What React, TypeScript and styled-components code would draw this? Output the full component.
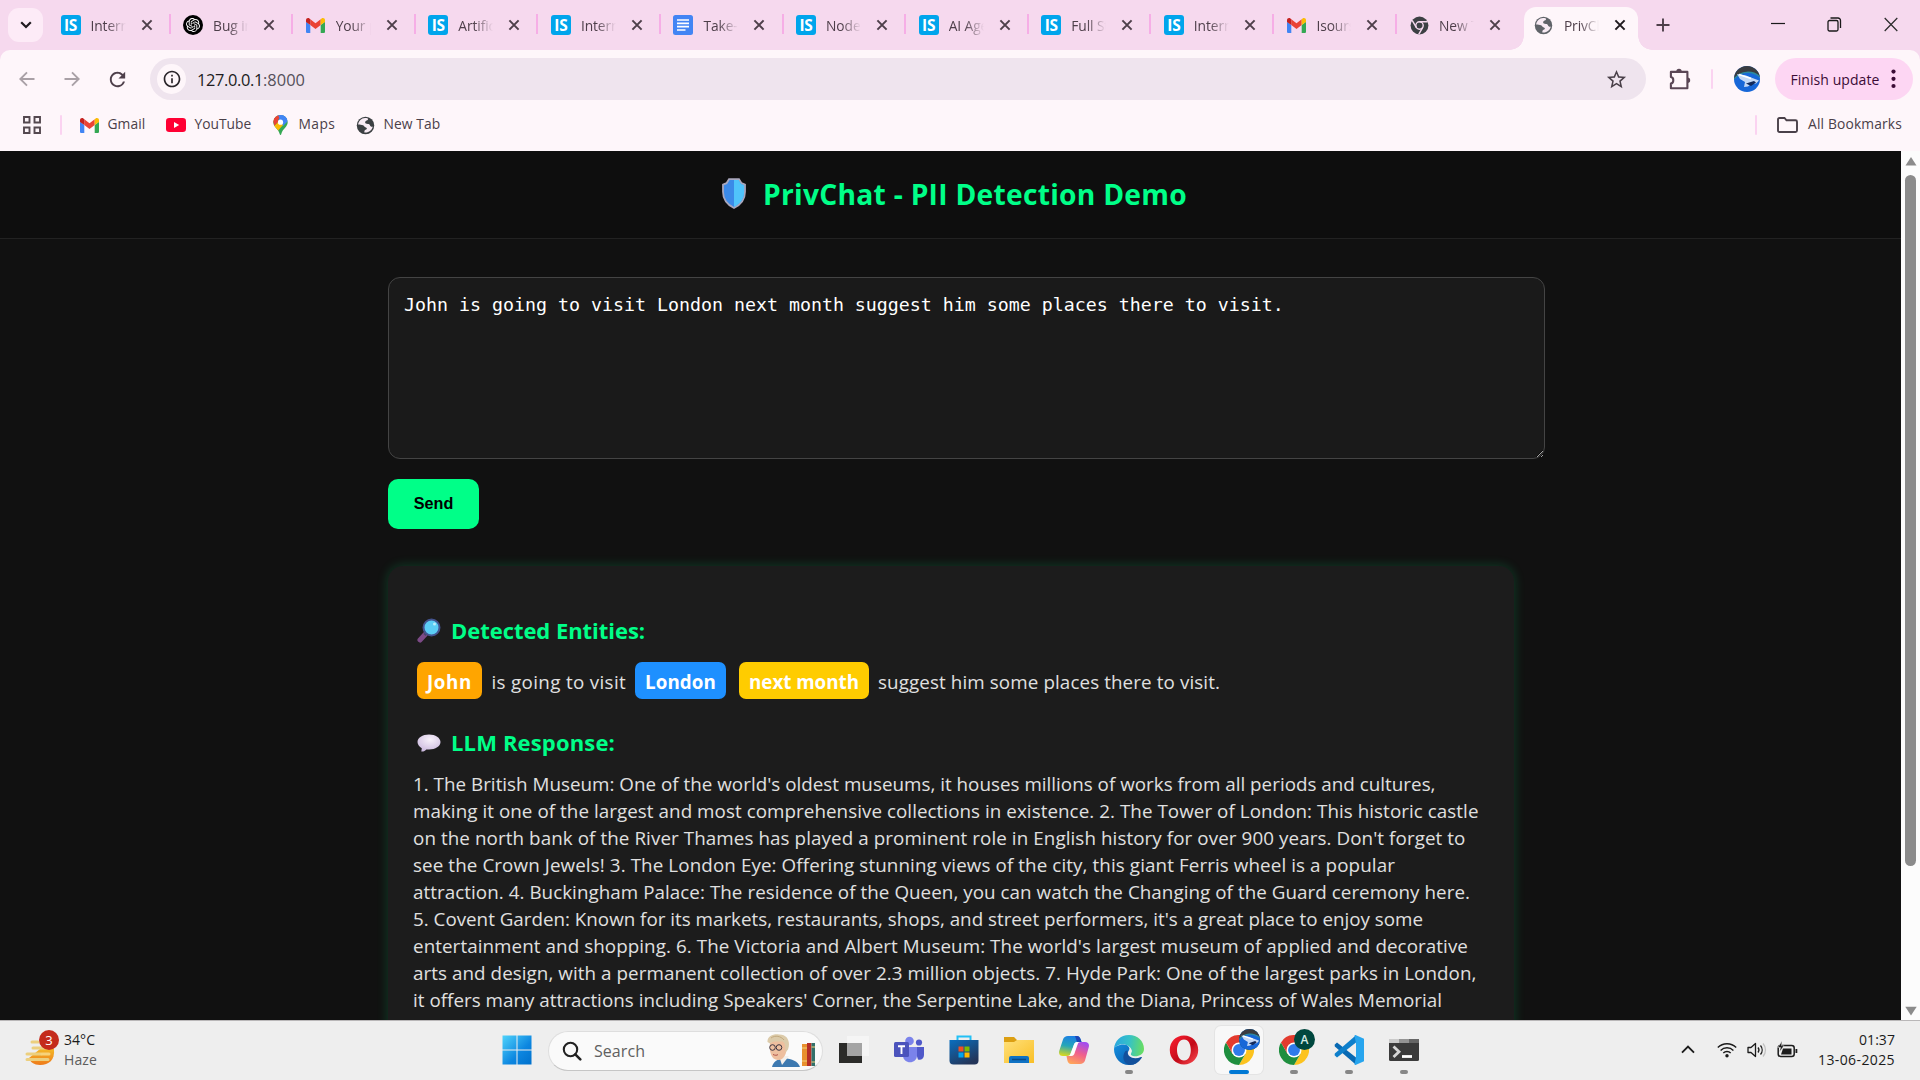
import React, { useLayoutEffect, useRef, useState } from 'react';
import styled, { createGlobalStyle } from 'styled-components';
import { MdStarBorder, MdInfoOutline, MdRefresh } from 'react-icons/md';
import { SiOpenai } from 'react-icons/si';

const UI = `"Open Sans", "Noto Sans", sans-serif`;

const GlobalStyle = createGlobalStyle`
  html, body { margin: 0; padding: 0; overflow: hidden; background: #111; }
  *, *::before, *::after { box-sizing: border-box; }
  svg { display: block; flex: none; }
`;

/* Text tracked so that it spans a given width. */
const FitSpan = styled.span`
  display: inline-block;
  white-space: pre;
  flex: none;
`;
const FitBox = styled.span<{ $w: number }>`
  display: block;
  width: ${(p) => p.$w}px;
  white-space: pre;
  flex: none;
`;
function Fit({ w, children }: { w: number; children: string }) {
  const ref = useRef<HTMLSpanElement>(null);
  const [spacing, setSpacing] = useState(0);
  useLayoutEffect(() => {
    if (!ref.current) return;
    const natural = ref.current.getBoundingClientRect().width;
    setSpacing((w - natural) / children.length);
  }, [w, children]);
  return (
    <FitBox $w={w}>
      <FitSpan ref={ref} style={{ letterSpacing: spacing }}>{children}</FitSpan>
    </FitBox>
  );
}

const Screen = styled.div`
  width: 1920px;
  height: 1080px;
  display: flex;
  flex-direction: column;
  overflow: hidden;
  font-family: ${UI};
  background: #111;
`;

/* ---------- browser frame ---------- */
const TabStrip = styled.div`
  height: 50px;
  flex: none;
  display: flex;
  align-items: flex-start;
  background: #f6d9ee;
  padding-left: 8px;
`;
const TabSearch = styled.div`
  width: 35px;
  height: 34px;
  margin: 8px 5.5px 0 0;
  border-radius: 11px;
  background: #fdebf7;
  display: grid;
  place-items: center;
  flex: none;
`;
const Tab = styled.div<{ $sep: boolean }>`
  width: 122.6px;
  height: 50px;
  flex: none;
  display: flex;
  align-items: center;
  padding-left: 12px;
  background: ${(p) => (p.$sep ? 'linear-gradient(#f6aee6, #f6aee6) right 0 top 14px / 2.4px 20px no-repeat' : 'none')};
`;
const Favicon = styled.div`
  width: 20px;
  height: 20px;
  display: grid;
  place-items: center;
  flex: none;
`;
const TabTitle = styled.div`
  width: 35px;
  margin-left: 10px;
  height: 24px;
  line-height: 26px;
  font-size: 13.8px;
  letter-spacing: -0.1px;
  color: #4e3f4a;
  overflow: hidden;
  white-space: pre;
  mask-image: linear-gradient(to right, #000 45%, transparent 100%);
`;
const CloseSlot = styled.div`
  margin-left: 15px;
  width: 12px;
`;
const ActiveTab = styled.div`
  width: 114px;
  height: 43px;
  flex: none;
  margin: 7px 0 0 4.3px;
  background: #fef6fa;
  border-radius: 12px 12px 0 0;
  display: flex;
  align-items: center;
  padding: 0 0 7px 10px;
  position: relative;
  &::before, &::after {
    content: '';
    position: absolute;
    bottom: 0;
    width: 14px;
    height: 14px;
  }
  &::before { left: -14px; background: radial-gradient(circle at 0 0, transparent 13.5px, #fef6fa 14px); }
  &::after { right: -14px; background: radial-gradient(circle at 100% 0, transparent 13.5px, #fef6fa 14px); }
`;
const NewTab = styled.div`
  margin: 18px 0 0 18px;
`;
const WindowButtons = styled.div`
  margin-left: auto;
  padding: 17px 22px 0 0;
  display: flex;
  gap: 42px;
`;
const ToolbarBack = styled.div`
  flex: none;
  background: #f6d9ee;
`;
const Toolbar = styled.div`
  height: 58px;
  background: #fef6fa;
  border-radius: 10px 10px 0 0;
  display: flex;
  align-items: center;
  padding-left: 16px;
`;
const NavIcon = styled.div<{ $mr: number }>`
  width: 22px;
  height: 22px;
  display: grid;
  place-items: center;
  margin-right: ${(p) => p.$mr}px;
`;
const Omnibox = styled.div`
  width: 1496px;
  height: 42px;
  border-radius: 21px;
  background: #efe4ee;
  display: flex;
  align-items: center;
  padding: 0 18px 0 7px;
  margin-right: 23px;
  font-size: 16.4px;
  color: #201b20;
`;
const InfoBadge = styled.div`
  width: 29px;
  height: 30px;
  border-radius: 50%;
  background: #fef6fa;
  display: grid;
  place-items: center;
  margin-right: 11px;
`;
const Port = styled.div`
  color: #55505a;
  flex: 1;
`;
const Divider = styled.div<{ $ml: number; $mr: number }>`
  width: 2.4px;
  height: 20px;
  border-radius: 1px;
  background: #fbd3f1;
  margin: 0 ${(p) => p.$mr}px 0 ${(p) => p.$ml}px;
`;
const UpdatePill = styled.div`
  width: 138px;
  height: 42px;
  border-radius: 21px;
  background: #fdd6f3;
  margin-left: 15px;
  padding-left: 15px;
  display: flex;
  align-items: center;
  font-size: 14px;
  color: #3b0c36;
`;
const Bookmarks = styled.div`
  height: 43px;
  flex: none;
  background: #fef6fa;
  display: flex;
  align-items: center;
  padding: 0 18px 9px 23px;
  font-size: 13.8px;
  line-height: 18px;
  color: #4a4049;
`;
const Bookmark = styled.div<{ $gap: number; $mr: number }>`
  display: flex;
  align-items: center;
  gap: ${(p) => p.$gap}px;
  margin-right: ${(p) => p.$mr}px;
`;
const BookmarkLabel = styled.div`
  padding-bottom: 2px;
`;
const Spacer = styled.div`
  flex: 1;
`;

/* ---------- page ---------- */
const Viewport = styled.div`
  height: 869px;
  flex: none;
  display: flex;
  overflow: hidden;
`;
const Page = styled.div`
  width: 1901px;
  height: 869px;
  overflow: hidden;
  background: #111;
`;
const PageHeader = styled.header`
  height: 88px;
  background: #0e0e0e;
  border-bottom: 1px solid #222;
  display: flex;
  justify-content: center;
  align-items: flex-start;
  padding: 23px 0 0 8px;
  gap: 17px;
  color: #00ff88;
  font-weight: 700;
  font-size: 28.2px;
  line-height: 40px;
`;
const ShieldSlot = styled.div`
  padding-top: 4px;
`;
const Main = styled.main`
  padding: 38px 0 0 388px;
`;
const Prompt = styled.textarea`
  display: block;
  width: 1157px;
  height: 182px;
  padding: 15px;
  border: 1px solid #444;
  border-radius: 12px;
  background: #1a1a1a;
  color: #fff;
  outline: none;
  resize: both;
  font-family: "DejaVu Sans Mono", "Liberation Mono", monospace;
  font-size: 18.27px;
  line-height: 24px;
`;
const SendButton = styled.button`
  display: block;
  width: 91px;
  height: 50px;
  margin: 20px 0 37px;
  padding: 0 0 1px;
  border: 0;
  border-radius: 10px;
  background: #00ff88;
  color: #000;
  font: 700 16.2px "Liberation Sans", Arial, sans-serif;
`;
const Card = styled.section`
  width: 1126px;
  height: 640px;
  padding: 49px 25px 0;
  border-radius: 15px;
  background: #1c1c1c;
  box-shadow: 0 0 12px rgba(0, 255, 136, 0.2);
  color: #e0e0e0;
  font-size: 18.8px;
`;
const SectionTitle = styled.h3`
  margin: 0;
  height: 31px;
  display: flex;
  align-items: center;
  padding-left: 4px;
  gap: 10px;
  color: #00ff88;
  font-size: 22px;
  line-height: 31px;
`;
const Entities = styled.div`
  margin: 16px 0 28px;
  height: 37px;
  line-height: 41px;
  display: flex;
  padding-left: 4px;
`;
const Tag = styled.span<{ $color: string; $mr: number }>`
  height: 37px;
  padding: 0 10px;
  border-radius: 7px;
  background: ${(p) => p.$color};
  color: #fff;
  font-weight: 700;
  margin-right: ${(p) => p.$mr}px;
`;
const Plain = styled.span<{ $mr?: number }>`
  margin-right: ${(p) => p.$mr ?? 0}px;
`;
const Response = styled.div`
  margin-top: 13px;
  line-height: 27px;
`;
const Scrollbar = styled.div`
  width: 19px;
  background: #fcfcfc;
  display: flex;
  flex-direction: column;
  align-items: center;
  justify-content: space-between;
  padding: 6px 0 4px;
`;
const Track = styled.div`
  flex: 1;
  padding-top: 9px;
`;
const Thumb = styled.div`
  width: 11px;
  height: 691px;
  border-radius: 6px;
  background: #8b8b8b;
`;

/* ---------- taskbar ---------- */
const Taskbar = styled.footer`
  height: 60px;
  flex: none;
  background: #eee;
  border-top: 1px solid #b9b7b8;
  display: flex;
  align-items: center;
  color: #1b1b1b;
  font-size: 14px;
`;
const Weather = styled.div`
  width: 493px;
  flex: none;
  display: flex;
  align-items: center;
  gap: 4px;
  padding-left: 24px;
`;
const TwoLines = styled.div`
  line-height: 20px;
  padding-bottom: 1px;
`;
const Muted = styled.div`
  color: #5c5c5c;
`;
const AppSlot = styled.div<{ $active?: boolean }>`
  width: 48px;
  height: 48px;
  margin: 0 7px 1px 0;
  flex: none;
  border-radius: 6px;
  display: flex;
  flex-direction: column;
  align-items: center;
  justify-content: flex-end;
  background: ${(p) => (p.$active ? '#f8f8f8' : 'transparent')};
  box-shadow: ${(p) => (p.$active ? '0 0 0 1px #e4e4e4' : 'none')};
`;
const IndicatorRow = styled.div`
  height: 9px;
  display: flex;
  align-items: flex-end;
`;
const Indicator = styled.div<{ $kind?: string }>`
  width: ${(p) => (p.$kind === 'active' ? 20 : 8)}px;
  height: 4px;
  border-radius: 2px;
  background: ${(p) => (p.$kind === 'active' ? '#0078d4' : p.$kind === 'open' ? '#868686' : 'transparent')};
`;
const SearchPill = styled.div`
  width: 275px;
  height: 40px;
  margin-right: 7px;
  flex: none;
  border-radius: 20px;
  border: 1px solid #dedede;
  border-bottom-color: #c6c6c6;
  background: #fafafa;
  display: flex;
  align-items: center;
  padding: 0 5px 0 13px;
  gap: 12px;
  font-size: 16px;
  color: #606060;
`;
const Tray = styled.div`
  margin-left: auto;
  display: flex;
  align-items: center;
  padding-right: 25px;
`;
const TraySlot = styled.div<{ $mr: number }>`
  margin-right: ${(p) => p.$mr}px;
  padding-bottom: 2px;
`;
const Clock = styled(TwoLines)`
  display: flex;
  flex-direction: column;
  align-items: flex-end;
`;

/* ---------- icons ---------- */
const X = ({ color = '#4e3f4a' }: { color?: string }) => (
  <svg width="12" height="12" viewBox="0 0 12 12"><path d="M1.4 1.4l9.2 9.2M10.6 1.4l-9.2 9.2" stroke={color} strokeWidth="2" /></svg>
);
const ISBox = styled.div`
  width: 20px;
  height: 20px;
  border-radius: 3px;
  background: #00a5ec;
  color: #fff;
  font: 700 15.5px/20px ${UI};
  letter-spacing: -0.3px;
  text-align: center;
`;
const PuzzleIcon = () => (
  <svg width="22" height="22" viewBox="0 0 22 22">
    <path d="M1.900 3.900h16.500v16.300H1.900v-4.600c3.200-.4 3.200-6.200 0-6.600z" fill="none" stroke="#5a4655" strokeWidth="2.100" strokeLinejoin="round" />
    <path d="M7.300 3.500a2.700 2.700 0 0 1 5.400 0zM18.500 9.600a2.700 2.700 0 0 1 0 5.400z" fill="#5a4655" />
  </svg>
);
const GmailIcon = () => (
  <svg width="19" height="15" viewBox="0 0 19 15">
    <path d="M0 2v11.7c0 .7.6 1.3 1.3 1.3h3V7L0 3.8z" fill="#4285f4" />
    <path d="M19 2v11.7c0 .7-.6 1.3-1.3 1.3h-3V7L19 3.8z" fill="#34a853" />
    <path d="M4.3 7V1.3l5.2 3.9 5.2-3.9V7L9.5 11z" fill="#ea4335" />
    <path d="M0 2C0 .3 2-.6 3.4.5l.9.8V7L0 3.9z" fill="#c5221f" />
    <path d="M19 2c0-1.700-2-2.600-3.400-1.500l-.9.8V7L19 3.900z" fill="#fbbc04" />
  </svg>
);
const DocsIcon = () => (
  <svg width="20" height="20" viewBox="0 0 20 20">
    <rect width="20" height="20" rx="2.500" fill="#4285f4" />
    <path d="M4 5h12M4 8.400h12M4 11.700h12M4 15h8.500" stroke="#fff" strokeWidth="1.700" />
  </svg>
);
const OpenAIBox = styled.div`
  width: 20px;
  height: 20px;
  border-radius: 50%;
  background: #000;
  color: #fff;
  display: grid;
  place-items: center;
`;
const Globe = ({ color }: { color: string }) => (
  <svg width="19" height="19" viewBox="0 0 20 20">
    <circle cx="10" cy="10" r="9.200" fill={color} />
    <path d="M9.500 2.200C5.500 2.500 2.800 5.200 2.200 9c1.800.2 4 .1 5.200.8 1.300.8 1.400 2 3 2.300 1.500.4 1.400 2-.2 2.300-1.200.3-1.500 1.500-1.400 3 4.500.6 8-2.200 8.900-6.300-1.300.5-2.600-.1-3-1.400-.4-1.400-2-1.200-3.300-1.500-1.800-.3-2.500-2-1-3 .9-.7 2.400-.7 2.300-2C12.600 2.500 11 2.100 9.500 2.200z" fill="#f8ebf4" />
  </svg>
);
const ChromeGray = () => (
  <svg width="19" height="19" viewBox="0 0 20 20">
    <circle cx="10" cy="10" r="9.400" fill="#3c4043" />
    <circle cx="10" cy="10" r="3.900" fill="none" stroke="#f6d9ee" strokeWidth="1.500" />
    <path d="M10 6.100h8.600M6.600 12L2.300 4.600M13.400 12L9.200 19.300" stroke="#f6d9ee" strokeWidth="1.500" />
  </svg>
);
const MapsPin = () => (
  <svg width="15" height="20" viewBox="0 0 15 20">
    <defs><clipPath id="pin"><path d="M7.500 0A7.200 7.200 0 0 0 .3 7.200C.3 12 5.500 13.500 6.700 19c.2 1.200 1.400 1.200 1.600 0 1.200-5.500 6.400-7 6.400-11.800A7.200 7.200 0 0 0 7.500 0z" /></clipPath></defs>
    <g clipPath="url(#pin)">
      <rect width="15" height="20" fill="#34a853" />
      <path d="M0 0h9L2 9 0 7z" fill="#ea4335" />
      <path d="M5 0h10v3L9 8z" fill="#4285f4" />
      <path d="M8 0h7v6l-5 5-5-5z" fill="#4285f4" />
      <path d="M0 12l6-6 4 4-7 8z" fill="#fbbc04" />
      <path d="M0 2l6 4-5 5z" fill="#ea4335" />
    </g>
    <circle cx="7.500" cy="7.200" r="2.600" fill="#fff" />
  </svg>
);
const Avatar = ({ size, id }: { size: number; id: string }) => (
  <svg width={size} height={size} viewBox="0 0 26 26">
    <defs><clipPath id={id}><circle cx="13" cy="13" r="13" /></clipPath></defs>
    <g clipPath={`url(#${id})`}>
      <rect width="26" height="26" fill="#1767d8" />
      <path d="M0 0h26v11C18 4 8 5 0 13z" fill="#3a3c40" />
      <path d="M0 13C7 5 18 4 26 11" fill="none" stroke="#2b8aa0" strokeWidth="1.400" />
      <path d="M3 8l9 1.500 9 3.500 4 1.500-3 3-5 .5-3 2.500-4 .5 1-5-5-3z" fill="#c3d8f6" />
      <path d="M12 17.500l8-2.500 2 1.500-5 3.500z" fill="#122a5c" />
      <path d="M5 8.500l12 4" stroke="#fff" strokeWidth="1.500" />
    </g>
  </svg>
);
const ChromeIcon = () => (
  <svg width="30" height="30" viewBox="0 0 48 48">
    <path d="M24 12h20.800A24 24 0 0 1 24 48l10.400-18z" fill="#fcc31f" />
    <path d="M3.200 12A24 24 0 0 0 24 48l10.400-18H13.600z" fill="#1e8e3e" />
    <path d="M24 12H44.800A24 24 0 0 0 3.200 12l10.400 18z" fill="#e33b2e" />
    <circle cx="24" cy="24" r="12" fill="#fff" />
    <circle cx="24" cy="24" r="9.500" fill="#2f7bea" />
  </svg>
);
const ChromeWrap = styled.div`
  position: relative;
`;
const ProfileBadge = styled.div`
  position: absolute;
  left: 15px;
  top: -6px;
  width: 21px;
  height: 21px;
  border-radius: 50%;
  background: #00473e;
  color: #d5ece6;
  font-size: 12px;
  font-weight: 600;
  line-height: 21px;
  text-align: center;
`;

const Magnifier = () => (
  <svg width="24" height="25" viewBox="0 0 24 25">
    <path d="M8.500 16L3 22" stroke="#7c4a86" strokeWidth="5" strokeLinecap="round" />
    <path d="M9.500 15l-2 2" stroke="#4a4468" strokeWidth="3" />
    <circle cx="14.500" cy="9.500" r="8" fill="#5bcdf5" stroke="#44548f" strokeWidth="2" />
    <circle cx="17.500" cy="6" r="1.500" fill="#b8eefc" />
  </svg>
);
const Bubble = () => (
  <svg width="24" height="18" viewBox="0 0 24 18">
    <defs><radialGradient id="bub" cx=".55" cy=".3" r=".7"><stop offset="0" stopColor="#f8f2fb" /><stop offset="1" stopColor="#cdbbdf" /></radialGradient></defs>
    <path d="M12 .5C5.500.5.500 3.800.500 8c0 2.600 1.800 4.800 4.300 6.200L4.300 17.500c2 .3 4-.7 5-2.100l2.700.2c6.500 0 11.500-3.300 11.500-7.500S18.500.5 12 .5z" fill="url(#bub)" />
  </svg>
);
const Shield = () => (
  <svg width="24" height="31" viewBox="0 0 24 31">
    <path d="M7 1.200h10l2.500 4 3.500 1.500v7c0 8-4.500 13-11 16.300C5.500 26.700 1 21.700 1 13.700v-7l3.500-1.500z" fill="#3b8ae8" stroke="#a9a7bd" strokeWidth="1.800" />
    <path d="M12 2h4.600l2.300 3.900 3.200 1.400v6.400c0 7.300-4 12-10.100 15.200z" fill="#50c4fb" />
  </svg>
);

const WinIcon = () => (
  <svg width="30" height="30" viewBox="0 0 30 30">
    <defs><linearGradient id="win" x1="0" y1="0" x2="1" y2="1"><stop offset="0" stopColor="#4fd3fb" /><stop offset=".6" stopColor="#0c86e0" /><stop offset="1" stopColor="#0070cc" /></linearGradient></defs>
    <path d="M.5.5h14v14H.5zM15.500.5h14v14h-14zM.5 15.500h14v14H.5zM15.500 15.500h14v14h-14z" fill="url(#win)" />
  </svg>
);
const TaskViewIcon = () => (
  <svg width="30" height="30" viewBox="0 0 30 30">
    <path d="M0 8h23v20H0z" fill="#2b2b29" />
    <path d="M8 1h22v20H8z" fill="#f5f5f5" />
    <path d="M8 8h15v13H8z" fill="#a4a4a4" />
  </svg>
);
const TeamsIcon = () => (
  <svg width="30" height="30" viewBox="0 0 30 30">
    <circle cx="15.500" cy="6" r="4.300" fill="#7b83eb" /><circle cx="25" cy="7.500" r="3.100" fill="#5059c9" />
    <path d="M20 12h10v8c0 3.500-3 5.500-6 4.500z" fill="#5059c9" />
    <path d="M9 12h14v8.500c0 9-14 9-14 0z" fill="#7b83eb" />
    <rect y="7" width="15" height="15" rx="1.500" fill="#4b53bc" />
    <path d="M4 11.300h7M7.500 11.300V19" stroke="#fff" strokeWidth="1.900" />
  </svg>
);
const StoreIcon = () => (
  <svg width="30" height="30" viewBox="0 0 30 30">
    <defs><linearGradient id="st" x1="0" y1="0" x2=".6" y2="1"><stop offset="0" stopColor="#0a6fc0" /><stop offset="1" stopColor="#233559" /></linearGradient></defs>
    <path d="M8.500 6V1.500h13V6" fill="none" stroke="#23c0f5" strokeWidth="2" />
    <path d="M.5 5h29v20.500a4 4 0 0 1-4 4h-21a4 4 0 0 1-4-4z" fill="url(#st)" />
    <path d="M9.500 11.500h5v5h-5z" fill="#f25022" /><path d="M15.500 11.500h5v5h-5z" fill="#7fba00" />
    <path d="M9.500 17.500h5v5h-5z" fill="#00a4ef" /><path d="M15.500 17.500h5v5h-5z" fill="#ffb900" />
  </svg>
);
const FolderIcon = () => (
  <svg width="30" height="30" viewBox="0 0 30 30">
    <defs><linearGradient id="fo" x1="0" y1="0" x2="1" y2="1"><stop offset="0" stopColor="#ffe07a" /><stop offset="1" stopColor="#f9bf26" /></linearGradient></defs>
    <path d="M0 2h10l3 3h17v6H0z" fill="#dc9f12" />
    <path d="M0 7h10l3-2h17v23H0z" fill="url(#fo)" />
    <path d="M5 28v-5a2 2 0 0 1 2-2h16a2 2 0 0 1 2 2v5z" fill="#0f72c4" />
    <path d="M8 24.500h14" stroke="#0a4a86" strokeWidth="1.500" />
  </svg>
);
const CopilotIcon = () => (
  <svg width="30" height="30" viewBox="0 0 30 30">
    <defs>
      <linearGradient id="c1" x1=".5" y1="0" x2=".3" y2="1"><stop offset="0" stopColor="#1b7fe4" /><stop offset=".5" stopColor="#25a6b8" /><stop offset="1" stopColor="#d8d820" /></linearGradient>
      <linearGradient id="c2" x1=".7" y1="0" x2=".3" y2="1"><stop offset="0" stopColor="#a24df0" /><stop offset=".5" stopColor="#f0608c" /><stop offset="1" stopColor="#ffa45a" /></linearGradient>
    </defs>
    <path d="M9 1h9c2 0 3 1.500 3.500 3l1 3H18c-1.500 0-2.500 1-3 2.500L12 18c-.6 2-2 3-4 3H4c-3 0-4.500-2-3.800-5L4 4.500C4.700 2.300 6.500 1 9 1z" fill="url(#c1)" />
    <path d="M21 29h-9c-2 0-3-1.500-3.500-3l-1-5H12c1.500 0 2.500-1 3-2.500L18 10c.6-2 2-3 4-3h4c3 0 4.500 2 3.800 5L26 25.500c-.7 2.200-2.500 3.500-5 3.500z" fill="url(#c2)" />
    <path d="M16 1h2c2 0 3 1.500 3.500 3l1 3H18z" fill="#1c47b8" />
    <path d="M15 9.500c.5-1.500 1.500-2.500 3-2.500h1.500L16 17c-.7 3-2 4-4 4h-1.500z" fill="#fff" opacity=".85" />
  </svg>
);
const EdgeIcon = () => (
  <svg width="30" height="30" viewBox="0 0 30 30">
    <defs>
      <linearGradient id="e1" x1="0" y1=".3" x2="1" y2=".4"><stop offset="0" stopColor="#2aa6e0" /><stop offset=".5" stopColor="#35c1c8" /><stop offset="1" stopColor="#68dd62" /></linearGradient>
      <linearGradient id="e2" x1="0" y1="0" x2="1" y2="1"><stop offset="0" stopColor="#1490df" /><stop offset="1" stopColor="#0a55a8" /></linearGradient>
    </defs>
    <path d="M15 0C6.500 0 .5 6 0 14c4-7 16-6 18 2-.5 2-1.500 2.500-1 4 3 2.500 13 1.500 13-6C30 6 23.500 0 15 0z" fill="url(#e1)" />
    <path d="M0 14C0 22.500 6 30 15 30c3 0 6-.8 8-2.200-8 1-12-5.800-8.500-11.800C17 13 14 9.500 9.500 9.500 4.500 9.500 0 12 0 14z" fill="url(#e2)" />
    <path d="M11.500 16C7 22 10 29 16 30c5 0 9-3 11.800-7.200.4-.7-.2-1.100-.8-.8C20 25 13 22.500 13.500 15.500z" fill="#12509c" />
  </svg>
);
const OperaIcon = () => (
  <svg width="30" height="30" viewBox="0 0 30 30">
    <defs><linearGradient id="op" x1="0" y1="0" x2="1" y2="1"><stop offset="0" stopColor="#ff2032" /><stop offset=".55" stopColor="#c30a18" /><stop offset="1" stopColor="#ff5055" /></linearGradient></defs>
    <path fillRule="evenodd" d="M15 .5C6.500.5.800 7 .800 15S6.500 29.500 15 29.500 29.200 23 29.200 15 23.500.5 15 .5zM15 4.500c4.500 0 6.800 4.700 6.800 10.500S19.500 25.500 15 25.500 8 20.800 8 15s2.500-10.500 7-10.500z" fill="url(#op)" />
  </svg>
);
const VSCodeIcon = () => (
  <svg width="30" height="30" viewBox="0 0 30 30">
    <path d="M.6 9.800L3 7.600l19 14.900v7.300L.8 11.500z" fill="#0869b3" />
    <path d="M.6 20.200L3 22.400 22 7.500V.2L.8 18.500z" fill="#0e7fcb" />
    <path d="M21.500 0L30 3.800v22.400L21.500 30c-1 .1-1-1-1-1L22 22V8l-1.500-7s0-1.100 1-1z" fill="#27a5ee" />
  </svg>
);
const TerminalIcon = () => (
  <svg width="30" height="30" viewBox="0 0 30 30">
    <rect y="4" width="30" height="22" rx="1.500" fill="#3b3b3b" />
    <path d="M0 4h10v4H0z" fill="#cacaca" /><path d="M10 4h10v4H10z" fill="#949494" /><path d="M20 4h10v4H20z" fill="#666" />
    <path d="M4.500 11.500l5.500 5.300L4.500 22" fill="none" stroke="#d6d6d6" strokeWidth="2.800" />
    <path d="M13 21.500h10" stroke="#fff" strokeWidth="2.800" />
  </svg>
);
const SearchArt = () => (
  <svg width="50" height="33" viewBox="0 0 50 33">
    <path d="M5 33c1-5 5-8 12-9 8 1 14 3 16 9z" fill="#3d79b0" />
    <path d="M12 22l3 9 7-9z" fill="#f4f0ec" />
    <path d="M3 9c-1 8 1 17 8 17 6 0 9-6 9-16L13 3z" fill="#eebf9f" />
    <path d="M.5 8C0 2 7-.5 12 .5c8-.5 12 7 9 15l-2.500 3c0-5 0-9-3-11C11 8 6 6 3 9.500z" fill="#dccbaa" />
    <path d="M4 4c4-3 10-2 13 2" stroke="#c2a97e" fill="none" />
    <circle cx="5.500" cy="13.500" r="2.800" fill="none" stroke="#3b3440" strokeWidth="1" /><circle cx="12" cy="13.500" r="2.800" fill="none" stroke="#3b3440" strokeWidth="1" />
    <path d="M6 20.500c2 1 4 1 5 0" stroke="#b0524a" fill="none" />
    <path d="M35 10h5v22h-5z" fill="#e8902e" /><path d="M40 9h4.500v23H40z" fill="#b52e27" /><path d="M44.500 9H48v23h-3.500z" fill="#32706a" />
    <path d="M35 14h5M35 27h5M44.500 13H48M44.500 28H48" stroke="#f3d27a" />
  </svg>
);
const HazeIcon = () => (
  <svg width="36" height="34" viewBox="0 0 36 34">
    <defs><linearGradient id="hz" x1="0" y1="0" x2="0" y2="1"><stop offset="0" stopColor="#f4b928" /><stop offset="1" stopColor="#ee7a1a" /></linearGradient></defs>
    <path d="M16 15h14c1 11-5 16-14 16-6 0-10-3-11-7z" fill="url(#hz)" />
    <path d="M8 8h6M9 14h16M3 20h14M3 25.500h21" stroke="#eccf7e" strokeWidth="3" strokeLinecap="round" />
    <path d="M18 20h7" stroke="#f7d37a" strokeWidth="3" strokeLinecap="round" />
  </svg>
);
const HazeWrap = styled.div`
  position: relative;
`;
const CountBadge = styled.div`
  position: absolute;
  left: 15px;
  top: -4px;
  width: 20px;
  height: 20px;
  border-radius: 50%;
  background: #c42b1c;
  color: #fff;
  font-size: 13px;
  line-height: 20px;
  text-align: center;
`;

const favicons: Record<string, React.ReactNode> = {
  is: <ISBox>IS</ISBox>,
  ai: <OpenAIBox><SiOpenai size={14} /></OpenAIBox>,
  gmail: <GmailIcon />,
  docs: <DocsIcon />,
  chrome: <ChromeGray />,
};
const tabs: [string, string][] = [
  ['is', 'Intern'], ['ai', 'Bug in'], ['gmail', 'Your p'], ['is', 'Artific'], ['is', 'Intern'], ['docs', 'Take-h'],
  ['is', 'Node.'], ['is', 'AI Age'], ['is', 'Full St'], ['is', 'Intern'], ['gmail', 'Isours'], ['chrome', 'New T'],
];

const response: [string, number][] = [
  ["1. The British Museum: One of the world's oldest museums, it houses millions of works from all periods and cultures,", 1022.5],
  ['making it one of the largest and most comprehensive collections in existence. 2. The Tower of London: This historic castle', 1065.5],
  ["on the north bank of the River Thames has played a prominent role in English history for over 900 years. Don't forget to", 1052.5],
  ['see the Crown Jewels! 3. The London Eye: Offering stunning views of the city, this giant Ferris wheel is a popular', 982],
  ['attraction. 4. Buckingham Palace: The residence of the Queen, you can watch the Changing of the Guard ceremony here.', 1057],
  ["5. Covent Garden: Known for its markets, restaurants, shops, and street performers, it's a great place to enjoy some", 1010],
  ["entertainment and shopping. 6. The Victoria and Albert Museum: The world's largest museum of applied and decorative", 1055],
  ['arts and design, with a permanent collection of over 2.3 million objects. 7. Hyde Park: One of the largest parks in London,', 1063.5],
  ["it offers many attractions including Speakers' Corner, the Serpentine Lake, and the Diana, Princess of Wales Memorial", 1029],
  ['Fountain. 8. The Shard: The tallest building in the UK, with an observation deck offering panoramic views of the city.', 1019],
];

const apps: { icon: React.ReactNode; kind?: string }[] = [
  { icon: <TaskViewIcon /> },
  { icon: <TeamsIcon /> },
  { icon: <StoreIcon /> },
  { icon: <FolderIcon /> },
  { icon: <CopilotIcon /> },
  { icon: <EdgeIcon />, kind: 'open' },
  { icon: <OperaIcon /> },
  { icon: <ChromeWrap><ChromeIcon /><ProfileBadge><Avatar size={21} id="av2" /></ProfileBadge></ChromeWrap>, kind: 'active' },
  { icon: <ChromeWrap><ChromeIcon /><ProfileBadge>A</ProfileBadge></ChromeWrap>, kind: 'open' },
  { icon: <VSCodeIcon />, kind: 'open' },
  { icon: <TerminalIcon />, kind: 'open' },
];

export default function App() {
  return (
    <Screen>
      <GlobalStyle />
      <TabStrip>
        <TabSearch>
          <svg width="12" height="8" viewBox="0 0 12 8"><path d="M1.200 1.200L6 6l4.800-4.800" fill="none" stroke="#201a1f" strokeWidth="2.200" /></svg>
        </TabSearch>
        {tabs.map(([icon, title], i) => (
          <Tab key={i} $sep={i < tabs.length - 1}>
            <Favicon>{favicons[icon]}</Favicon>
            <TabTitle>{title}</TabTitle>
            <CloseSlot><X /></CloseSlot>
          </Tab>
        ))}
        <ActiveTab>
          <Favicon><Globe color="#5f6368" /></Favicon>
          <TabTitle>PrivCh</TabTitle>
          <CloseSlot><X color="#1f1a1e" /></CloseSlot>
        </ActiveTab>
        <NewTab>
          <svg width="14" height="14" viewBox="0 0 14 14"><path d="M7 .5v13M.5 7h13" stroke="#4e3f4a" strokeWidth="1.900" /></svg>
        </NewTab>
        <WindowButtons>
          <svg width="14" height="15" viewBox="0 0 14 15"><path d="M0 6.500h14" stroke="#1a1a1a" strokeWidth="1.200" /></svg>
          <svg width="15" height="15" viewBox="0 0 15 15"><rect x="1" y="3.500" width="10" height="10.500" rx="1.500" fill="none" stroke="#1a1a1a" strokeWidth="1.300" /><path d="M3.500 1H11a2.500 2.500 0 0 1 2.500 2.500V11" fill="none" stroke="#1a1a1a" strokeWidth="1.300" /></svg>
          <svg width="14" height="15" viewBox="0 0 14 15"><path d="M.7 1l12.600 13M13.300 1L.7 14" stroke="#2a2a2a" strokeWidth="1.200" /></svg>
        </WindowButtons>
      </TabStrip>

      <ToolbarBack>
        <Toolbar>
          <NavIcon $mr={23}><svg width="16" height="16" viewBox="0 0 16 16"><path d="M15.500 8H1.500M8 1.300L1.300 8 8 14.700" fill="none" stroke="#a9a0a6" strokeWidth="1.900" /></svg></NavIcon>
          <NavIcon $mr={23}><svg width="16" height="16" viewBox="0 0 16 16"><path d="M.5 8h14M8 1.300L14.700 8 8 14.700" fill="none" stroke="#a9a0a6" strokeWidth="1.900" /></svg></NavIcon>
          <NavIcon $mr={22}><MdRefresh size={23} color="#4e3f4a" /></NavIcon>
          <Omnibox>
            <InfoBadge><MdInfoOutline size={20} color="#2a252a" /></InfoBadge>
            <Fit w={66}>127.0.0.1</Fit>
            <Port><Fit w={42}>:8000</Fit></Port>
            <MdStarBorder size={23} color="#4a4049" />
          </Omnibox>
          <NavIcon $mr={19}><PuzzleIcon /></NavIcon>
          <Divider $ml={1} $mr={21} />
          <Avatar size={26} id="av1" />
          <UpdatePill>
            <Fit w={89}>Finish update</Fit>
            <svg width="28" height="20" viewBox="0 0 28 20"><circle cx="14.500" cy="2.600" r="2.100" fill="#3b0c36" /><circle cx="14.500" cy="9.800" r="2.100" fill="#3b0c36" /><circle cx="14.500" cy="17" r="2.100" fill="#3b0c36" /></svg>
          </UpdatePill>
        </Toolbar>
      </ToolbarBack>

      <Bookmarks>
        <svg width="18" height="18" viewBox="0 0 18 18"><path d="M1 1h5.500v5.500H1zM11.500 1H17v5.500h-5.500zM1 11.500h5.500V17H1zM11.500 11.500H17V17h-5.500z" fill="none" stroke="#54484f" strokeWidth="1.900" /></svg>
        <Divider $ml={19} $mr={18} />
        <Bookmark $gap={8} $mr={21}><GmailIcon /><BookmarkLabel><Fit w={38}>Gmail</Fit></BookmarkLabel></Bookmark>
        <Bookmark $gap={8} $mr={22}>
          <svg width="20" height="14" viewBox="0 0 20 14"><rect width="20" height="14" rx="3.200" fill="#ff0033" /><path d="M8 4l5.200 3L8 10z" fill="#fff" /></svg>
          <BookmarkLabel><Fit w={57}>YouTube</Fit></BookmarkLabel>
        </Bookmark>
        <Bookmark $gap={10} $mr={21}><MapsPin /><BookmarkLabel><Fit w={37}>Maps</Fit></BookmarkLabel></Bookmark>
        <Bookmark $gap={8} $mr={0}><Globe color="#3c4043" /><BookmarkLabel><Fit w={57}>New Tab</Fit></BookmarkLabel></Bookmark>
        <Spacer />
        <Divider $ml={0} $mr={20} />
        <Bookmark $gap={10} $mr={0}>
          <svg width="21" height="16" viewBox="0 0 21 16"><path d="M1 2.500C1 1.500 1.500 1 2.500 1h5l2 2.300h9c1 0 1.500.5 1.500 1.500v8.700c0 1-.5 1.500-1.500 1.500h-16c-1 0-1.500-.5-1.500-1.500z" fill="none" stroke="#4a4049" strokeWidth="1.900" /></svg>
          <BookmarkLabel><Fit w={94}>All Bookmarks</Fit></BookmarkLabel>
        </Bookmark>
      </Bookmarks>

      <Viewport>
        <Page>
          <PageHeader>
            <ShieldSlot><Shield /></ShieldSlot>
            <Fit w={424}>PrivChat - PII Detection Demo</Fit>
          </PageHeader>
          <Main>
            <Prompt spellCheck={false} defaultValue="John is going to visit London next month suggest him some places there to visit." />
            <SendButton>Send</SendButton>
            <Card>
              <SectionTitle><Magnifier /><Fit w={194}>Detected Entities:</Fit></SectionTitle>
              <Entities>
                <Tag $color="#ffa500" $mr={9.5}><Fit w={45}>John</Fit></Tag>
                <Plain $mr={9}><Fit w={134.5}>is going to visit</Fit></Plain>
                <Tag $color="#1e90ff" $mr={13}><Fit w={71}>London</Fit></Tag>
                <Tag $color="#ffcc00" $mr={9}><Fit w={110}>next month</Fit></Tag>
                <Plain><Fit w={342}>suggest him some places there to visit.</Fit></Plain>
              </Entities>
              <SectionTitle><Bubble /><Fit w={164}>LLM Response:</Fit></SectionTitle>
              <Response>
                {response.map(([line, w]) => <Fit key={line} w={w}>{line}</Fit>)}
              </Response>
            </Card>
          </Main>
        </Page>
        <Scrollbar>
          <svg width="12" height="9" viewBox="0 0 12 9"><path d="M6 0l5.500 8.500H.5z" fill="#8b8b8b" strokeLinejoin="round" /></svg>
          <Track><Thumb /></Track>
          <svg width="12" height="10" viewBox="0 0 12 10"><path d="M6 9.500L.3.800h11.400z" fill="#8b8b8b" /></svg>
        </Scrollbar>
      </Viewport>

      <Taskbar>
        <Weather>
          <HazeWrap><HazeIcon /><CountBadge>3</CountBadge></HazeWrap>
          <TwoLines>
            <Fit w={31}>34°C</Fit>
            <Muted><Fit w={33}>Haze</Fit></Muted>
          </TwoLines>
        </Weather>
        <AppSlot><WinIcon /><IndicatorRow /></AppSlot>
        <SearchPill>
          <svg width="20" height="20" viewBox="0 0 20 20"><circle cx="8.500" cy="8.500" r="6.700" fill="none" stroke="#222" strokeWidth="2.100" /><path d="M13.300 13.300l5 5" stroke="#222" strokeWidth="2.600" strokeLinecap="round" /></svg>
          <Fit w={51}>Search</Fit>
          <Spacer />
          <SearchArt />
        </SearchPill>
        {apps.map((a, i) => (
          <AppSlot key={i} $active={a.kind === 'active'}>
            {a.icon}
            <IndicatorRow><Indicator $kind={a.kind} /></IndicatorRow>
          </AppSlot>
        ))}
        <Tray>
          <TraySlot $mr={22}><svg width="14" height="9" viewBox="0 0 14 9"><path d="M1 7.700L7 1.700l6 6" fill="none" stroke="#1b1b1b" strokeWidth="1.900" /></svg></TraySlot>
          <TraySlot $mr={10}>
            <svg width="20" height="16" viewBox="0 0 20 16"><path d="M.8 5.600a13 13 0 0 1 18.400 0M3.600 8.400a9 9 0 0 1 12.800 0M6.300 11a5.200 5.200 0 0 1 7.400 0" fill="none" stroke="#1b1b1b" strokeWidth="1.400" /><circle cx="10" cy="13.800" r="1.700" fill="#1b1b1b" /></svg>
          </TraySlot>
          <TraySlot $mr={9}>
            <svg width="21" height="16" viewBox="0 0 21 16"><path d="M1 5.500h3L8.500 1.500v13L4 10.500H1z" fill="none" stroke="#1b1b1b" strokeWidth="1.300" strokeLinejoin="round" /><path d="M11 5.500c1.200 1.500 1.200 3.500 0 5M13.500 3.500c2.200 2.600 2.200 6.400 0 9" fill="none" stroke="#1b1b1b" strokeWidth="1.300" /><path d="M16 1.500c3.300 3.800 3.300 9.200 0 13" fill="none" stroke="#c2c2c2" strokeWidth="1.300" /></svg>
          </TraySlot>
          <TraySlot $mr={20}>
            <svg width="21" height="18" viewBox="0 0 21 18"><rect x="1.200" y="4.500" width="16" height="11" rx="2.500" fill="none" stroke="#1b1b1b" strokeWidth="1.500" /><path d="M4 13.500l2-6h8.500v6z" fill="#1b1b1b" /><path d="M18.500 8h1.800v4h-1.800z" fill="#1b1b1b" /><path d="M5 0L.8 6.500h2.700L2.500 11 7 4.800H4.500z" fill="#1b1b1b" stroke="#eee" strokeWidth=".5" /></svg>
          </TraySlot>
          <Clock>
            <Fit w={36}>01:37</Fit>
            <Fit w={77}>13-06-2025</Fit>
          </Clock>
        </Tray>
      </Taskbar>
    </Screen>
  );
}
